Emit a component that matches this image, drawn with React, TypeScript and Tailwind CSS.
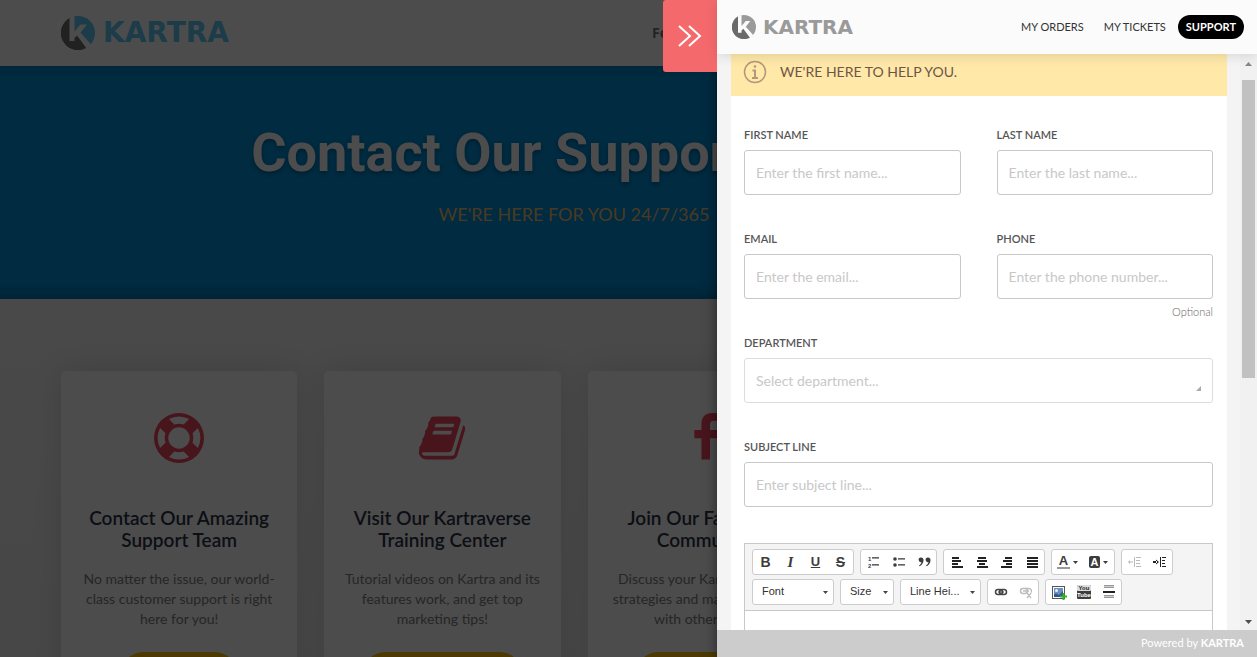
import type { ReactNode } from 'react';

const LIFE_RING =
  'M896 0q182 0 348 71t286 191 191 286 71 348-71 348-191 286-286 191-348 71-348-71-286-191-191-286-71-348 71-348 191-286 286-191 348-71zm0 128q-190 0-361 90l194 194q82-28 167-28t167 28l194-194q-171-90-361-90zm-678 1129l194-194q-28-82-28-167t28-167l-194-194q-90 171-90 361t90 361zm678 407q190 0 361-90l-194-194q-82 28-167 28t-167-28l-194 194q171 90 361 90zm0-384q159 0 271.5-112.5t112.5-271.5-112.5-271.5-271.5-112.5-271.5 112.5-112.5 271.5 112.5 271.5 271.5 112.5zm484-217l194 194q90-171 90-361t-90-361l-194 194q28 82 28 167t-28 167z';
const BOOK =
  'M1703 478q40 57 18 129l-275 906q-19 64-76.5 107.5t-122.5 43.5h-923q-77 0-148.5-53.5t-99.5-131.5q-24-67-2-127 0-4 3-27t4-37q1-8-3-21.5t-3-19.5q2-11 8-21t16.5-23.5 16.5-23.5q23-38 45-91.5t30-91.5q3-10 .5-30t-.5-28q3-11 17-28t17-23q21-36 42-92t25-90q1-9-2.5-32t.5-28q4-13 22-30.5t22-22.5q19-26 42.5-84.5t27.5-96.5q1-8-3-25.5t-2-26.5q2-8 9-18t18-23 17-21q8-12 16.5-30.5t15-35 16-36 19.5-32 26.5-23.5 36-11.5 47.5 5.5l-1 3q38-9 51-9h761q74 0 114 56t18 130l-274 906q-36 119-71.5 153.5t-128.5 34.5h-869q-27 0-38 15-11 16-1 43 24 70 144 70h923q29 0 56-15.5t35-41.5l300-987q7-22 5-57 38 15 59 43zm-1064 2q-4 13 2 22.5t20 9.5h608q13 0 25.5-9.5t16.5-22.5l21-64q4-13-2-22.5t-20-9.5h-608q-13 0-25.5 9.5t-16.5 22.5zm-83 256q-4 13 2 22.5t20 9.5h608q13 0 25.5-9.5t16.5-22.5l21-64q4-13-2-22.5t-20-9.5h-608q-13 0-25.5 9.5t-16.5 22.5z';
const FACEBOOK =
  'M1343 12v264h-157q-86 0-116 36t-30 108v189h293l-39 296h-254v759h-306v-759h-255v-296h255v-218q0-186 104-288.5t277-102.5q147 0 228 12z';

const cards = [
  {
    icon: LIFE_RING,
    title: 'Contact Our Amazing Support Team',
    text: 'No matter the issue, our world-class customer support is right here for you!',
    action: 'Contact Us',
  },
  {
    icon: BOOK,
    title: 'Visit Our Kartraverse Training Center',
    text: 'Tutorial videos on Kartra and its features work, and get top marketing tips!',
    action: 'Go To Kartraverse',
  },
  {
    icon: FACEBOOK,
    title: 'Join Our Facebook Community',
    text: 'Discuss your Kartra business strategies and marketing ideas with other users!',
    action: 'Join Facebook!',
  },
];

function LogoMark({ dark, light, hole, className }: { dark: string; light: string; hole: string; className: string }) {
  return (
    <svg viewBox="0 0 34 34" className={className} aria-hidden="true">
      <circle cx="17" cy="17" r="17" fill={light} />
      <path d="M11 1.1A17 17 0 1 0 25.5 31.7L17 20H11Z" fill={dark} />
      <path d="M8.500 1.500L13.500 0V15.500L19.500 8.500H26L19.500 16.500L30 28.500L26 33L16 19.500L13.500 22V25H8.500Z" fill={hole} />
    </svg>
  );
}

type FieldProps = { id: string; label: string; helper?: string; children: ReactNode };

function Field({ id, label, helper, children }: FieldProps) {
  return (
    <div className="flex min-h-[104px] flex-col">
      <label htmlFor={id} className="mb-[7px] text-[11px] leading-4 font-semibold text-[#555] uppercase">
        {label}
      </label>
      {children}
      {helper && <p className="mt-[5px] text-right text-[11px] leading-4 font-light text-[#666]">{helper}</p>}
    </div>
  );
}

function TextField({ id, label, placeholder, helper }: { id: string; label: string; placeholder: string; helper?: string }) {
  return (
    <Field id={id} label={label} helper={helper}>
      <input
        id={id}
        type="text"
        placeholder={placeholder}
        className="h-[45px] w-full rounded-[3px] border border-[#c8c8c8] bg-white px-[11px] text-sm text-[#555] outline-none placeholder:text-[#c8c8c8]"
      />
    </Field>
  );
}

function ToolGroup({ children }: { children: ReactNode }) {
  return <div className="flex h-[26px] items-center rounded-[3px] border border-[#ccc] bg-white">{children}</div>;
}

function Tool({ label, children, wide, muted }: { label: string; children: ReactNode; wide?: boolean; muted?: boolean }) {
  return (
    <button
      type="button"
      aria-label={label}
      className={[
        'flex h-6 items-center justify-center gap-[3px] text-[#3c3c3c]',
        wide ? 'w-[31px]' : 'w-[25px]',
        muted ? 'opacity-35' : '',
      ].join(' ')}
    >
      {children}
    </button>
  );
}

function Icon({ children }: { children: ReactNode }) {
  return (
    <svg viewBox="0 0 16 16" className="size-4" fill="currentColor" aria-hidden="true">
      {children}
    </svg>
  );
}

function Caret() {
  return (
    <svg viewBox="0 0 5 3" className="h-[3px] w-[5px] shrink-0" fill="currentColor" aria-hidden="true">
      <path d="M0 0H5L2.500 3Z" />
    </svg>
  );
}

function Align({ rows }: { rows: number[][] }) {
  return (
    <Icon>
      {rows.map(([x, w], i) => (
        <rect key={i} x={x} y={3 + i * 3} width={w} height="2" fill="#222" />
      ))}
    </Icon>
  );
}

function ToolSelect({ label, className }: { label: string; className: string }) {
  return (
    <div className={`relative h-[26px] ${className}`}>
      <select
        aria-label={label}
        className="block h-full w-full appearance-none rounded-[3px] border border-[#ccc] bg-white pb-px pl-[9px] font-['Liberation_Sans',Arial,sans-serif] text-[11px] text-[#333]"
      >
        <option>{label}</option>
      </select>
      <span className="pointer-events-none absolute inset-y-0 right-[6px] flex items-center text-[#444]">
        <Caret />
      </span>
    </div>
  );
}

function Editor() {
  return (
    <div className="border border-[#c8c8c8]">
      <div className="flex flex-col gap-1 border-b border-[#c8c8c8] bg-[#f4f4f4] px-[7px] pt-[5px] pb-[5px]">
        <div className="flex gap-[6px]">
          <ToolGroup>
            <Tool label="Bold"><b className="font-['Liberation_Sans'] text-sm">B</b></Tool>
            <Tool label="Italic"><i className="font-['Liberation_Serif'] text-[15px] font-bold">I</i></Tool>
            <Tool label="Underline"><u className="font-['Liberation_Sans'] text-[13px] font-bold">U</u></Tool>
            <Tool label="Strikethrough"><s className="font-['Liberation_Sans'] text-sm font-bold">S</s></Tool>
          </ToolGroup>
          <ToolGroup>
            <Tool label="Numbered list">
              <Icon>
                <text x="2" y="7" fontSize="6" fontWeight="bold" fontFamily="Liberation Sans">1</text>
                <text x="2" y="14" fontSize="6" fontWeight="bold" fontFamily="Liberation Sans">2</text>
                <path d="M6 3h7v2H6zM6 10h7v2H6z" fill="#999" />
                <path d="M6 3h7v1H6zM6 10h7v1H6z" fill="#666" />
              </Icon>
            </Tool>
            <Tool label="Bulleted list">
              <Icon>
                <circle cx="4" cy="5" r="1.800" />
                <circle cx="4" cy="11" r="1.800" />
                <path d="M7 4h7v2H7zM7 10h7v2H7z" fill="#999" />
                <path d="M7 4h7v1H7zM7 10h7v1H7z" fill="#666" />
              </Icon>
            </Tool>
            <Tool label="Block quote">
              <Icon>
                <path d="M5 3.500a2.300 2.300 0 1 0 .6 4.500Q5.200 10 3 11.500l.8.8Q7.500 10 7.500 6 7.500 3.500 5 3.500Z" />
                <path d="M12 3.500a2.300 2.300 0 1 0 .6 4.500Q12.200 10 10 11.500l.8.8Q14.500 10 14.500 6 14.500 3.500 12 3.500Z" />
              </Icon>
            </Tool>
          </ToolGroup>
          <ToolGroup>
            <Tool label="Align left"><Align rows={[[3, 7], [3, 9], [3, 6], [3, 11]]} /></Tool>
            <Tool label="Center"><Align rows={[[4, 8], [3, 10], [5, 6], [3, 11]]} /></Tool>
            <Tool label="Align right"><Align rows={[[6, 7], [4, 9], [7, 6], [2, 11]]} /></Tool>
            <Tool label="Justify"><Align rows={[[3, 11], [3, 11], [3, 11], [3, 11]]} /></Tool>
          </ToolGroup>
          <ToolGroup>
            <Tool label="Text color" wide>
              <span className="border-b-2 border-[#999] px-[2px] font-['Liberation_Sans'] text-[13px] leading-3 font-bold">A</span>
              <Caret />
            </Tool>
            <Tool label="Background color" wide>
              <span className="rounded-[2px] bg-[#3c3c3c] px-[2px] font-['Liberation_Sans'] text-[11px] leading-3 font-bold text-white">A</span>
              <Caret />
            </Tool>
          </ToolGroup>
          <ToolGroup>
            <Tool label="Decrease indent" muted>
              <Icon>
                <path d="M2 7.500h4v1H2zM3 6v4L1 8zM7 3h1v10H7zM9 3h5v1H9zM9 6h4v1H9zM9 9h4v1H9zM9 12h5v1H9z" />
              </Icon>
            </Tool>
            <Tool label="Increase indent">
              <Icon>
                <path d="M1 7h4v2H1zM4 5.500v5L7 8zM8 3h1v10H8zM10 3h4v1h-4zM10 6h3v1h-3zM10 9h3v1h-3zM10 12h4v1h-4z" fill="#222" />
              </Icon>
            </Tool>
          </ToolGroup>
        </div>
        <div className="flex gap-[6px]">
          <ToolSelect label="Font" className="w-[82px]" />
          <ToolSelect label="Size" className="w-[54px]" />
          <ToolSelect label="Line Hei..." className="w-[81px]" />
          <ToolGroup>
            <Tool label="Link">
              <Icon>
                <rect x="2.500" y="5.500" width="7" height="5" rx="2.500" fill="none" stroke="#444" strokeWidth="1.500" />
                <rect x="6.500" y="5.500" width="7" height="5" rx="2.500" fill="none" stroke="#444" strokeWidth="1.500" />
                <rect x="5" y="7.500" width="6" height="1" />
              </Icon>
            </Tool>
            <Tool label="Unlink" muted>
              <Icon>
                <rect x="2.500" y="4.500" width="7" height="5" rx="2.500" fill="none" stroke="#444" strokeWidth="1.500" />
                <path d="M7 4.500h4a2.500 2.500 0 0 1 2 4M5 7h6M9 9l4 5M13 9l-4 5" fill="none" stroke="#444" strokeWidth="1.300" />
              </Icon>
            </Tool>
          </ToolGroup>
          <ToolGroup>
            <Tool label="Image">
              <Icon>
                <rect x="1.500" y="2.500" width="12" height="12" fill="#fff" stroke="#555" />
                <rect x="3" y="4" width="9" height="9" fill="#6b8fc4" />
                <circle cx="5.500" cy="6.500" r="1.500" fill="#e8f0fb" />
                <path d="M3 13V10.500l2-1 3 1.500 4-4V13Z" fill="#33558d" />
                <path d="M11.500 9h2v2.500H16v2h-2.500V16h-2v-2.500H9v-2h2.500Z" fill="#35b02c" />
              </Icon>
            </Tool>
            <Tool label="YouTube">
              <Icon>
                <rect x="1" y="1" width="14" height="14" rx="1" fill="#3c3c3c" />
                <rect x="1" y="1" width="14" height="6" rx="1" fill="#ddd" />
                <text x="8" y="6" fontSize="6" fontWeight="bold" textAnchor="middle" fill="#222" fontFamily="Liberation Sans">You</text>
                <text x="8" y="13" fontSize="6" fontWeight="bold" textAnchor="middle" fill="#fff" fontFamily="Liberation Sans">Tube</text>
              </Icon>
            </Tool>
            <Tool label="Page break">
              <Icon>
                <path d="M3 1h10v3H3zM3 11h10v3H3z" fill="#ccc" />
                <path d="M3 1h10v1H3zM3 3h10v1H3zM3 11h10v1H3zM3 13h10v1H3z" fill="#999" />
                <rect x="2" y="7" width="12" height="2" fill="#222" />
              </Icon>
            </Tool>
          </ToolGroup>
        </div>
      </div>
      <textarea aria-label="Message" className="block h-40 w-full resize-none bg-white outline-none" />
    </div>
  );
}

function SupportPage() {
  return (
    <div className="h-full overflow-hidden bg-white">
      <header className="flex h-[66px] items-center justify-between bg-white pr-[170px] pl-[61px]">
        <a href="#home" className="flex items-center gap-2 font-['DejaVu_Sans'] text-[28px] font-bold text-[#5cc8f2]">
          <LogoMark dark="#6e6e6e" light="#5cc8f2" hole="#fff" className="size-[34px]" />
          KARTRA
        </a>
        <nav className="w-[435px] font-['Open_Sans'] text-sm font-bold text-[#777]">
          <a href="#features">Features</a>
        </nav>
      </header>
      <section className="flex h-[233px] flex-col items-center bg-[linear-gradient(to_bottom,#0081c4,#008fd9_12px,#008fd9_217px,#0078b6)] pt-[55px] pr-[109px] text-center">
        <h1 className="font-[Roboto] text-[54px] leading-[64px] font-bold text-white [text-shadow:0_2px_4px_rgba(0,0,0,0.3)]">
          Contact Our Support Team
        </h1>
        <p className="mt-[17px] text-lg leading-6 text-[#f8c070]">WE'RE HERE FOR YOU 24/7/365</p>
      </section>
      <section className="grid grid-cols-4 gap-[27px] bg-gradient-to-b from-[#f4f4f4] to-[#ececec] pt-[72px] pr-[170px] pl-[61px]">
        {cards.map((card) => (
          <article
            key={card.title}
            className="flex flex-col items-center rounded-[5px] bg-white px-4 pt-[42px] pb-10 text-center shadow-[0_0_30px_rgba(0,0,0,0.12)]"
          >
            <svg viewBox="0 0 1792 1792" className="size-[50px]" fill="#f0475f" aria-hidden="true">
              <path d={card.icon} />
            </svg>
            <h2 className="mt-[44px] text-[19px] leading-[22px] font-semibold text-[#2b3348]">{card.title}</h2>
            <p className="mt-[18px] text-sm leading-5 text-[#808080]">{card.text}</p>
            <button type="button" className="mt-[23px] h-11 rounded-full bg-[#ffc107] px-6 text-sm font-semibold text-white">
              {card.action}
            </button>
          </article>
        ))}
      </section>
    </div>
  );
}

function HelpDrawer() {
  return (
    <aside className="absolute inset-y-0 right-0 flex w-[540px] max-w-full flex-col bg-[#f4f4f4] shadow-[0_0_12px_rgba(0,0,0,0.5)]">
      <button
        type="button"
        aria-label="Close help panel"
        className="absolute top-0 right-full flex h-[72px] w-[54px] items-center justify-center rounded-l-[3px] bg-[#f46a6c]"
      >
        <svg viewBox="0 0 26 22" className="h-[22px] w-[26px]" fill="none" stroke="#fff" strokeWidth="2" aria-hidden="true">
          <path d="M2 1L13 11L2 21M12 1L23 11L12 21" />
        </svg>
      </button>

      <header className="z-10 flex h-[54px] shrink-0 items-center justify-between bg-[#fbfbfb] pr-[13px] pl-[15px] shadow-[0_2px_12px_rgba(0,0,0,0.12)]">
        <a href="#kartra" className="flex items-center gap-[7px] font-['DejaVu_Sans'] text-xl font-bold text-[#9a9a9a]">
          <LogoMark dark="#6a6a6a" light="#9a9a9a" hole="#fbfbfb" className="size-6" />
          KARTRA
        </a>
        <nav className="flex items-center text-[11px] text-[#333]">
          <a href="#orders" className="mr-5">MY ORDERS</a>
          <a href="#tickets" className="mr-3">MY TICKETS</a>
          <a href="#support" className="flex h-6 items-center rounded-full bg-black px-2 font-bold text-white">
            SUPPORT
          </a>
        </nav>
      </header>

      <div className="flex min-h-0 flex-1">
        <main className="min-w-0 flex-1 overflow-hidden pr-[13px] pl-[14px]">
          <div className="bg-white">
            <div className="flex h-[42px] items-center gap-[13px] bg-[#ffe8a8] pb-[6px] pl-3 text-sm text-[#6f5547]">
              <svg viewBox="0 0 24 24" className="size-6" fill="none" stroke="#b3977a" strokeWidth="1.500" aria-hidden="true">
                <circle cx="12" cy="12" r="10.500" />
                <path d="M9.500 10.500h2.500V17.500M9 18h6" strokeWidth="2" />
                <circle cx="12" cy="6.500" r="1.300" fill="#b3977a" stroke="none" />
              </svg>
              WE'RE HERE TO HELP YOU.
            </div>
            <form className="pt-[31px] pr-[14px] pl-[13px]">
              <div className="grid grid-cols-2 gap-x-9">
                <TextField id="first-name" label="First name" placeholder="Enter the first name..." />
                <TextField id="last-name" label="Last name" placeholder="Enter the last name..." />
                <TextField id="email" label="Email" placeholder="Enter the email..." />
                <TextField id="phone" label="Phone" placeholder="Enter the phone number..." helper="Optional" />
              </div>
              <Field id="department" label="Department">
                <div className="relative">
                  <select
                    id="department"
                    className="block h-[45px] w-full appearance-none rounded-[3px] border border-[#ddd] bg-white px-[11px] text-sm text-[#c8c8c8] outline-none"
                  >
                    <option>Select department...</option>
                  </select>
                  <svg viewBox="0 0 5 5" className="pointer-events-none absolute right-3 bottom-3 size-[5px]" fill="#aaa" aria-hidden="true">
                    <path d="M5 0V5H0Z" />
                  </svg>
                </div>
              </Field>
              <TextField id="subject" label="Subject line" placeholder="Enter subject line..." />
              <Editor />
            </form>
          </div>
        </main>
        <div className="flex w-[17px] flex-col items-center bg-[#f1f1f1] pb-[6px]" aria-hidden="true">
          <svg viewBox="0 0 7 4" className="mt-2 h-1 w-[7px]" fill="#888">
            <path d="M0 4H7L3.500 0Z" />
          </svg>
          <div className="mt-[14px] h-[298px] w-[13px] bg-[#c1c1c1]" />
          <svg viewBox="0 0 7 4" className="mt-auto h-1 w-[7px]" fill="#505050">
            <path d="M0 0H7L3.500 4Z" />
          </svg>
        </div>
      </div>

      <footer className="flex h-[27px] shrink-0 items-center justify-end bg-[#ccc] pr-[13px] text-[11px] text-white">
        <span>
          Powered by <b>KARTRA</b>
        </span>
      </footer>
    </aside>
  );
}

export default function App() {
  return (
    <div className="relative h-screen overflow-hidden font-[Lato,sans-serif]">
      <SupportPage />
      <div className="absolute inset-0 bg-black/70" />
      <HelpDrawer />
    </div>
  );
}
